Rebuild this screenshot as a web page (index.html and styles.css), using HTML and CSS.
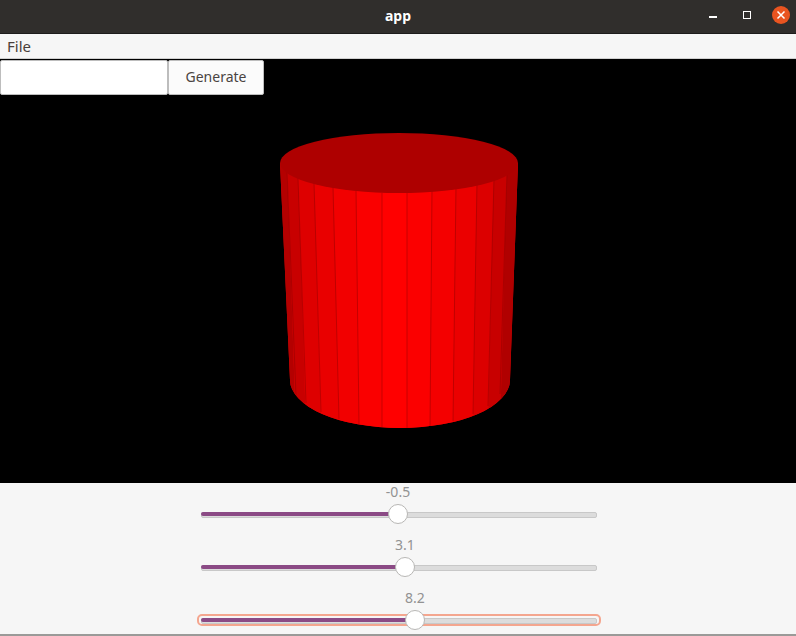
FILE: index.html
```html
<!DOCTYPE html>
<html lang="en">
<head>
<meta charset="utf-8">
<title>app</title>
<link rel="stylesheet" href="styles.css">
</head>
<body>
<div class="window">
  <header class="titlebar">
    <span class="title">app</span>
    <div class="controls">
      <button class="wm wm-min" aria-label="Minimize"><span class="min-line"></span></button>
      <button class="wm wm-max" aria-label="Maximize"><span class="max-box"></span></button>
      <button class="wm wm-close" aria-label="Close">
        <svg width="18" height="18" viewBox="0 0 18 18"><circle cx="9" cy="9" r="9" fill="#e95420"/><path d="M5.500 5.500l7 7M12.500 5.500l-7 7" stroke="#fff" stroke-width="1.500" fill="none"/></svg>
      </button>
    </div>
  </header>
  <nav class="menubar"><span class="menu-item">File</span></nav>
  <main class="viewport">
    <div class="toolbar">
      <input class="entry" type="text" aria-label="Text">
      <button class="generate">Generate</button>
    </div>
    <svg class="scene" width="796" height="424" viewBox="0 59 796 424">
      <defs>
        <clipPath id="body"><path d="M280 163L290 380A110 48 0 0 0 510 380L518 163Z"/></clipPath>
      </defs>
      <g clip-path="url(#body)">
        <rect x="275" y="160" width="250" height="275" fill="#e40000"/>
        <polygon fill="#b40000" points="278,163 287,163 296,430 288,430"/>
        <polygon fill="#c80000" points="287,163 298,163 306,430 296,430"/>
        <polygon fill="#de0000" points="298,163 314,163 321,430 306,430"/>
        <polygon fill="#e90000" points="314,163 333,163 339,430 321,430"/>
        <polygon fill="#f20000" points="333,163 356,163 359,430 339,430"/>
        <polygon fill="#fa0000" points="356,163 382,163 382,430 359,430"/>
        <polygon fill="#ff0000" points="382,163 407,163 407,430 382,430"/>
        <polygon fill="#fb0000" points="407,163 432,163 430,430 407,430"/>
        <polygon fill="#f40000" points="432,163 456,163 453,430 430,430"/>
        <polygon fill="#eb0000" points="456,163 477,163 473,430 453,430"/>
        <polygon fill="#dc0000" points="477,163 494,163 488,430 473,430"/>
        <polygon fill="#c80000" points="494,163 507,163 500,430 488,430"/>
        <polygon fill="#b00000" points="507,163 520,163 512,430 500,430"/>
        <path class="seams" d="M287 170L296 396M298 178L306 403M314 183L321 412M333 188L339 419M356 191L359 424M382 193V427M407 193V428M432 191L430 426M456 188L453 421M477 183L473 414M494 178L488 406M507 172L500 394"/>
      </g>
      <ellipse cx="399" cy="163" rx="119" ry="30" fill="#ae0000"/>
    </svg>
  </main>
  <section class="sliders">
    <div class="slider">
      <div class="trough"><div class="fill" style="width:197px"><span class="thumb"><span class="value">-0.5</span></span></div></div>
    </div>
    <div class="slider">
      <div class="trough"><div class="fill" style="width:204px"><span class="thumb"><span class="value">3.1</span></span></div></div>
    </div>
    <div class="slider slider-focus">
      <div class="trough"><div class="fill" style="width:214px"><span class="thumb"><span class="value">8.2</span></span></div></div>
    </div>
  </section>
</div>
</body>
</html>
```
FILE: styles.css
```css
* { box-sizing: border-box; }
html, body { margin: 0; padding: 0; }
body { width: 796px; height: 636px; overflow: hidden; font-family: "Noto Sans", "Open Sans", sans-serif; font-size: 14px; background: #f6f6f6; }
.window { display: flex; flex-direction: column; width: 796px; height: 636px; border-bottom: 2px solid #9a9a98; }
.titlebar { position: relative; flex: 0 0 34px; display: flex; align-items: center; justify-content: center; background: #302e2c; border-bottom: 1px solid #1d1c1b; }
.title { color: #fff; font-weight: 700; font-size: 14px; line-height: 31px; height: 33px; }
.controls { position: absolute; top: 0; right: 0; height: 33px; display: flex; }
.wm { border: 0; padding: 0; background: none; display: flex; position: relative; }
.wm-min { width: 34px; height: 33px; }
.min-line { position: absolute; left: 0; top: 16px; width: 8px; height: 2px; background: #fff; }
.wm-max { width: 29px; height: 33px; }
.max-box { position: absolute; left: 0; top: 11px; width: 8px; height: 8px; border: 1px solid #fff; }
.wm-close { width: 24px; height: 33px; padding-top: 6px; }
.menubar { flex: 0 0 25px; display: flex; align-items: center; padding-left: 7px; background: #f6f6f6; border-bottom: 1px solid #d0d0d0; }
.menu-item { font-size: 15px; line-height: 24px; height: 24px; color: #4a3f3a; }
.viewport { position: relative; flex: 0 0 424px; background: #000; overflow: hidden; }
.scene { display: block; }
.seams { stroke: #800000; stroke-width: 1; stroke-opacity: .4; fill: none; }
.toolbar { position: absolute; left: 0; top: 1px; display: flex; height: 35px; z-index: 1; }
.entry { width: 168px; height: 35px; margin: 0; padding: 0 8px; background: #fff; border: 1px solid #bdbdbd; border-radius: 2px; outline: 0; }
.generate { width: 96px; height: 35px; margin: 0; padding: 0 0 2px; font: 14px "Noto Sans", "Open Sans", sans-serif; color: #4a4442; background: #fbfbfb; border: 1px solid #bdbdbd; border-radius: 2px; }
.sliders { flex: 1; display: flex; flex-direction: column; align-items: center; gap: 15px; padding-top: 25px; padding-left: 2px; }
.slider { height: 12px; width: 404px; margin-bottom: 26px; }
.slider:last-child { margin-bottom: 0; }
.trough { position: relative; width: 404px; height: 12px; padding: 2px; border: 2px solid transparent; border-radius: 5px; }
.trough::before { content: ""; position: absolute; left: 2px; right: 2px; top: 2px; height: 4px; background: #dcdcdc; border: 1px solid #c8c8c8; border-radius: 2px; }
.fill { position: relative; height: 4px; background: #8b4a85; border-radius: 2px; }
.thumb { position: absolute; right: -10px; top: -8px; width: 20px; height: 20px; background: #fff; border: 1px solid #b8b7b5; border-radius: 50%; }
.value { position: absolute; left: 50%; bottom: 100%; margin-bottom: 4px; transform: translateX(-50%); color: #929292; font-size: 14px; line-height: 18px; white-space: nowrap; }
.slider-focus .trough { border-color: #f4a68f; }
```
